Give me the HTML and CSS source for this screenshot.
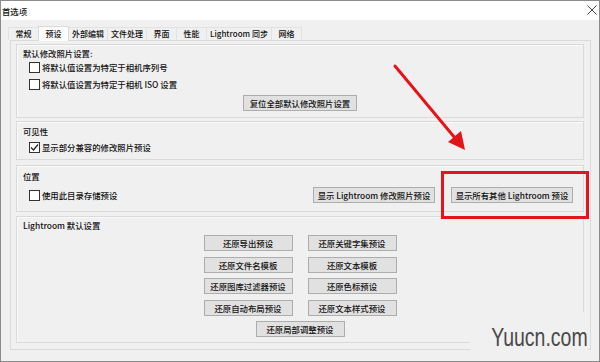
FILE: index.html
```html
<!DOCTYPE html>
<html lang="zh-CN">
<head>
<meta charset="UTF-8">
<title>首选项</title>
<link rel="stylesheet" href="styles.css">
</head>
<body>

<div class="window">
  <div class="titlebar">
    <span class="title">首选项</span>
    <svg class="close" width="10" height="10" viewBox="0 0 10 10"><path d="M0.5 0.5 L9.5 9.5 M9.5 0.5 L0.5 9.5" stroke="#444" stroke-width="1" fill="none"/></svg>
  </div>

  <div class="main">
    <div class="tabs">
      <span class="tab short">常规</span>
      <span class="tab short active">预设</span>
      <span class="tab">外部编辑</span>
      <span class="tab">文件处理</span>
      <span class="tab short">界面</span>
      <span class="tab short">性能</span>
      <span class="tab">Lightroom 同步</span>
      <span class="tab short">网络</span>
    </div>

    <div class="panel">
      <div class="group g-develop">
        <div class="group-title">默认修改照片设置:</div>
        <label class="check"><span class="box"></span>将默认值设置为特定于相机序列号</label>
        <label class="check gap"><span class="box"></span>将默认值设置为特定于相机 ISO 设置</label>
        <div class="center"><span class="btn reset">复位全部默认修改照片设置</span></div>
      </div>

      <div class="group g-visible">
        <div class="group-title">可见性</div>
        <label class="check"><span class="box checked"><svg width="9" height="9" viewBox="0 0 9 9"><path d="M1 4.5 L3.5 7 L8 1.5" stroke="#222" stroke-width="1.2" fill="none"/></svg></span>显示部分兼容的修改照片预设</label>
      </div>

      <div class="group g-location">
        <div class="group-title">位置</div>
        <div class="row">
          <label class="check"><span class="box"></span>使用此目录存储预设</label>
          <div class="row-buttons">
            <span class="btn show">显示 Lightroom 修改照片预设</span>
            <span class="btn show">显示所有其他 Lightroom 预设</span>
          </div>
        </div>
      </div>

      <div class="group g-defaults">
        <div class="group-title">Lightroom 默认设置</div>
        <div class="restore-grid">
          <span class="btn">还原导出预设</span>
          <span class="btn">还原关键字集预设</span>
          <span class="btn">还原文件名模板</span>
          <span class="btn">还原文本模板</span>
          <span class="btn">还原图库过滤器预设</span>
          <span class="btn">还原色标预设</span>
          <span class="btn">还原自动布局预设</span>
          <span class="btn">还原文本样式预设</span>
          <span class="btn last">还原局部调整预设</span>
        </div>
      </div>
    </div>
  </div>

  <svg class="arrow" width="600" height="362" viewBox="0 0 600 362">
    <line x1="395" y1="66" x2="455" y2="138" stroke="#e4141b" stroke-width="3" stroke-linecap="round"/>
    <polygon points="465,150 461,131 448,142" fill="#e4141b"/>
  </svg>
  <div class="highlight"></div>
  <div class="watermark"><span>Yuucn.com</span></div>
</div>

</body>
</html>
```

FILE: styles.css
```css
html, body { margin: 0; padding: 0; }
body { font-family: "Noto Sans CJK SC", "Noto Sans", sans-serif; font-size: 8.4px; font-weight: 500; color: #111; background: #fff; }

.window { position: relative; width: 600px; height: 362px; box-sizing: border-box; border: 1px solid #8c8c8c; background: #f0f0f0; overflow: hidden; }
.titlebar { height: 19px; background: #fff; display: flex; align-items: center; justify-content: space-between; padding: 0 1px; }
.title { line-height: 14px; }
.close { margin-right: 1px; margin-top: -1px; }

.main { padding: 7px 0 0 9px; }
.tabs { display: flex; align-items: flex-end; height: 13px; margin-left: -2px; }
.tab { height: 13px; box-sizing: border-box; border: 1px solid #e2e2e2; border-bottom: none; margin-left: -1px; padding: 0 3px; font-size: 8px; line-height: 11px; background: #f0f0f0; white-space: nowrap; }
.tab:first-child { margin-left: 0; }
.tab.short { padding: 0 6.5px; }
.tab.active { background: #fcfcfc; height: 15px; margin-bottom: -1px; position: relative; z-index: 1; line-height: 13px; border-color: #dadada; }

.panel { width: 581px; height: 310px; box-sizing: border-box; border: 1px solid #dadada; padding: 3px 6px 0 5px; display: flex; flex-direction: column; background: #f0f0f0; }

.group { border: 1px solid #dadada; box-shadow: inset 1px 1px 0 #fafafa; box-sizing: border-box; display: flex; flex-direction: column; }
.group-title { height: 14px; line-height: 14px; padding-left: 6px; }

.g-develop { height: 74px; padding-top: 1px; }
.g-visible { height: 39px; margin-top: 3px; padding-top: 2px; }
.g-visible .check { margin-top: 2px; }
.g-location { height: 47px; margin-top: 5px; padding-top: 3px; }
.g-defaults { height: 127px; margin-top: 4px; padding-top: 1px; }

.check { display: flex; align-items: center; height: 14px; padding-left: 12px; white-space: nowrap; }
.check.gap { margin-top: 3px; }
.box { width: 11px; height: 11px; box-sizing: border-box; border: 1px solid #333; background: #fff; margin-right: 2px; display: flex; align-items: center; justify-content: center; flex: none; }
.box svg { display: block; }

.center { display: flex; justify-content: center; margin-top: 4px; }

.btn { height: 16px; box-sizing: border-box; border: 1px solid #adadad; background: #e1e1e1; line-height: 14px; text-align: center; white-space: nowrap; display: block; }
.reset { width: 114px; }

.row { display: flex; align-items: center; height: 16px; margin-top: 4px; padding-right: 10px; }
.row-buttons { margin-left: auto; display: flex; gap: 16px; }
.show { width: 122px; }

.restore-grid { display: grid; grid-template-columns: 89px 89px; column-gap: 15px; row-gap: 5.5px; justify-content: center; margin-top: 3px; }
.restore-grid .btn { width: 89px; }
.restore-grid .last { grid-column: 1 / -1; justify-self: center; }

.arrow { position: absolute; left: -1px; top: -1px; pointer-events: none; }
.highlight { position: absolute; left: 440px; top: 170px; width: 148px; height: 48px; box-sizing: border-box; border: 3px solid #e4141b; }

.watermark { position: absolute; left: 469px; top: 311px; width: 118px; height: 40px; background: #f0f0f0; display: flex; justify-content: flex-end; }
.watermark span { font-family: "Liberation Sans", Arial, sans-serif; font-weight: 400; font-size: 25px; line-height: 25px; color: #4a4a4a; margin-top: 13px; transform: scaleX(0.78); transform-origin: right center; }
```
